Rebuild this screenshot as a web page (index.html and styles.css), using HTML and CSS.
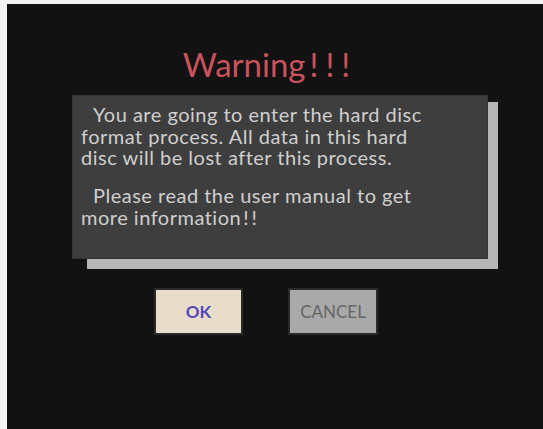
FILE: index.html
```html
<!DOCTYPE html>
<html>
<head>
<meta charset="utf-8">
<link rel="stylesheet" href="styles.css">
</head>
<body>
<div class="screen">
  <h1 class="title">Warning<span class="bang">!!!</span></h1>
  <div class="panel">
    <p class="para">You are going to enter the hard disc<br>format process. All data in this hard<br>disc will be lost after this process.</p>
    <p class="para">Please read the user manual to get<br>more information<span class="bang-sm">!!</span></p>
  </div>
  <div class="buttons">
    <div class="btn btn-ok">OK</div>
    <div class="btn btn-cancel">CANCEL</div>
  </div>
</div>
</body>
</html>
```

FILE: styles.css
```css
html, body {
  margin: 0;
  padding: 0;
  background: #f4f4f4;
  width: 543px;
  height: 429px;
  overflow: hidden;
}
.screen {
  position: relative;
  z-index: 0;
  margin: 4px 0 0 7px;
  width: 536px;
  height: 425px;
  background: #121212;
  box-sizing: border-box;
  padding-top: 40px;
  display: flex;
  flex-direction: column;
  font-family: Lato, "Open Sans", sans-serif;
}
.title {
  margin: 0;
  font-size: 33px;
  line-height: 40px;
  font-weight: 400;
  color: #c9525c;
  text-align: center;
  padding-right: 10px;
  height: 51px;
}
.bang {
  letter-spacing: 7px;
  margin-left: 4px;
}
.bang-sm {
  letter-spacing: 3px;
  margin-left: 2px;
}
.panel {
  position: relative;
  margin-left: 65px;
  width: 416px;
  height: 164px;
  box-sizing: border-box;
  background: #3e3e3e;
  border: 1px solid #343434;
  padding: 8px 0 0 8px;
  color: #cfcfcf;
  font-size: 20px;
  line-height: 21.7px;
  letter-spacing: 0.5px;
}
.panel::before {
  content: "";
  position: absolute;
  left: 14px;
  top: 6px;
  right: -11px;
  bottom: -11px;
  background: #b6b6b6;
  z-index: -1;
}
.para {
  margin: 0 0 16.3px 0;
  text-indent: 12px;
}
.buttons {
  display: flex;
  gap: 45px;
  margin: 29px 0 0 147px;
}
.btn {
  width: 89px;
  height: 47px;
  box-sizing: border-box;
  display: flex;
  align-items: center;
  justify-content: center;
  font-size: 17px;
  border: 2px solid #2a2a2a;
}
.btn-ok {
  background: #e8dcca;
  color: #5446b6;
  font-weight: 700;
}
.btn-cancel {
  width: 90px;
  background: #a9a9a9;
  color: #666666;
}
```
